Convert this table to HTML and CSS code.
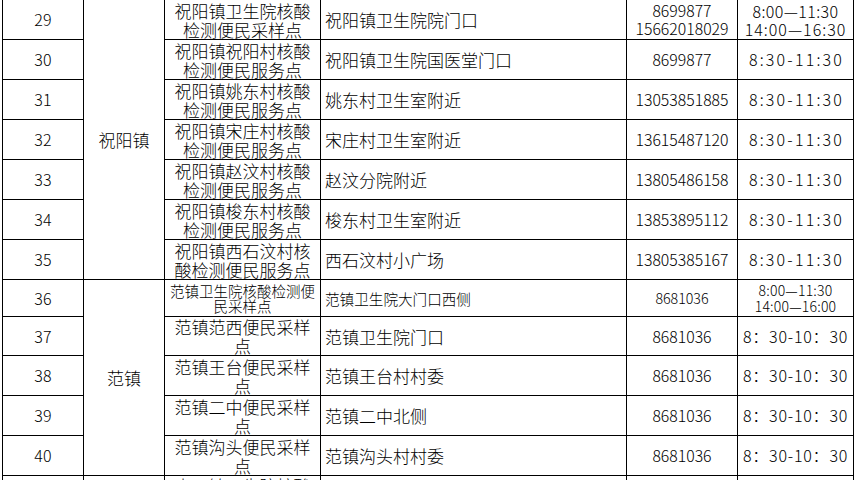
FILE: index.html
```html
<!DOCTYPE html>
<html lang="zh-CN">
<head>
<meta charset="utf-8">
<title>核酸检测便民采样点</title>
<link rel="stylesheet" href="styles.css">
</head>
<body>
<table class="sites">
  <colgroup>
    <col class="c-no"><col class="c-town"><col class="c-site"><col class="c-addr"><col class="c-tel"><col class="c-time">
  </colgroup>
  <tbody>
    <tr class="r40">
      <td class="no">29</td>
      <td class="town" rowspan="7">祝阳镇</td>
      <td class="site">祝阳镇卫生院核酸检测便民采样点</td>
      <td class="addr">祝阳镇卫生院院门口</td>
      <td class="tel tel-two">8699877<br>15662018029</td>
      <td class="time time-two">8:00—11:30<br><span class="wide">14:00—16:30</span></td>
    </tr>
    <tr class="r40">
      <td class="no">30</td>
      <td class="site">祝阳镇祝阳村核酸检测便民服务点</td>
      <td class="addr">祝阳镇卫生院国医堂门口</td>
      <td class="tel">8699877</td>
      <td class="time">8:30-11:30</td>
    </tr>
    <tr class="r40">
      <td class="no">31</td>
      <td class="site">祝阳镇姚东村核酸检测便民服务点</td>
      <td class="addr">姚东村卫生室附近</td>
      <td class="tel">13053851885</td>
      <td class="time">8:30-11:30</td>
    </tr>
    <tr class="r40">
      <td class="no">32</td>
      <td class="site">祝阳镇宋庄村核酸检测便民服务点</td>
      <td class="addr">宋庄村卫生室附近</td>
      <td class="tel">13615487120</td>
      <td class="time">8:30-11:30</td>
    </tr>
    <tr class="r40">
      <td class="no">33</td>
      <td class="site">祝阳镇赵汶村核酸检测便民服务点</td>
      <td class="addr">赵汶分院附近</td>
      <td class="tel">13805486158</td>
      <td class="time">8:30-11:30</td>
    </tr>
    <tr class="r40">
      <td class="no">34</td>
      <td class="site">祝阳镇梭东村核酸检测便民服务点</td>
      <td class="addr">梭东村卫生室附近</td>
      <td class="tel">13853895112</td>
      <td class="time">8:30-11:30</td>
    </tr>
    <tr class="r40">
      <td class="no">35</td>
      <td class="site">祝阳镇西石汶村核酸检测便民服务点</td>
      <td class="addr">西石汶村小广场</td>
      <td class="tel">13805385167</td>
      <td class="time">8:30-11:30</td>
    </tr>
    <tr class="r37">
      <td class="no">36</td>
      <td class="town" rowspan="5">范镇</td>
      <td class="site small">范镇卫生院核酸检测便民采样点</td>
      <td class="addr small">范镇卫生院大门口西侧</td>
      <td class="tel small">8681036</td>
      <td class="time time-small">8:00—11:30<br>14:00—16:00</td>
    </tr>
    <tr class="r39">
      <td class="no">37</td>
      <td class="site">范镇范西便民采样点</td>
      <td class="addr">范镇卫生院门口</td>
      <td class="tel">8681036</td>
      <td class="time time-fw">8：30-10：30</td>
    </tr>
    <tr class="r40">
      <td class="no">38</td>
      <td class="site">范镇王台便民采样点</td>
      <td class="addr">范镇王台村村委</td>
      <td class="tel">8681036</td>
      <td class="time time-fw">8：30-10：30</td>
    </tr>
    <tr class="r40">
      <td class="no">39</td>
      <td class="site">范镇二中便民采样点</td>
      <td class="addr">范镇二中北侧</td>
      <td class="tel">8681036</td>
      <td class="time time-fw">8：30-10：30</td>
    </tr>
    <tr class="r40">
      <td class="no">40</td>
      <td class="site">范镇沟头便民采样点</td>
      <td class="addr">范镇沟头村村委</td>
      <td class="tel">8681036</td>
      <td class="time time-fw">8：30-10：30</td>
    </tr>
    <tr class="r40 top">
      <td class="no"></td>
      <td class="town"></td>
      <td class="site">大王镇卫生院核酸检测便民采样点</td>
      <td class="addr"></td>
      <td class="tel"></td>
      <td class="time"></td>
    </tr>
  </tbody>
</table>
</body>
</html>
```

FILE: styles.css
```css
html, body {
  margin: 0;
  padding: 0;
  background: #fff;
}

body {
  width: 858px;
  height: 480px;
  overflow: hidden;
  font-family: "Noto Sans CJK SC", "Noto Sans", sans-serif;
  font-weight: 300;
  color: #000;
}

.sites {
  border-collapse: collapse;
  table-layout: fixed;
  width: 852px;
  margin: -1px 0 0 2px;
  font-size: 17px;
  line-height: 19px;
}

.c-no { width: 81px; }
.c-town { width: 81px; }
.c-site { width: 156px; }
.c-addr { width: 306px; }
.c-tel { width: 111px; }
.c-time { width: 116px; }

.sites td {
  border: 1px solid #000;
  padding: 0;
  vertical-align: middle;
  text-align: center;
  overflow: hidden;
}

.r40 { height: 40px; }
.r39 { height: 39px; }
.r37 { height: 37px; }

.sites td.no {
  font-size: 16px;
  letter-spacing: 0.3px;
}

.sites td.town {
  font-size: 17px;
}

.sites td.site {
  padding: 0 3px;
  font-size: 17px;
  line-height: 19px;
}

.sites td.site.small {
  font-size: 14.5px;
  line-height: 15px;
  padding: 0 2px;
}

.sites td.addr {
  text-align: left;
  padding-left: 4px;
  font-size: 17px;
}

.sites td.addr.small {
  font-size: 14.6px;
}

.sites td.tel {
  font-size: 15.8px;
}

.sites td.tel-two {
  line-height: 18px;
}

.sites td.tel.small {
  font-size: 14.2px;
}

.sites td.time {
  font-size: 16px;
  letter-spacing: 2.2px;
  padding-left: 2px;
}

.sites td.time-two {
  letter-spacing: 0.4px;
  line-height: 18px;
  padding-left: 0;
}

.wide {
  letter-spacing: 1px;
}

.sites td.time-small {
  font-size: 14px;
  line-height: 16px;
  letter-spacing: 0.2px;
  padding-left: 0;
}

.sites td.time-fw {
  letter-spacing: 0.8px;
  padding-left: 0;
}

.top td {
  vertical-align: top;
}
```
